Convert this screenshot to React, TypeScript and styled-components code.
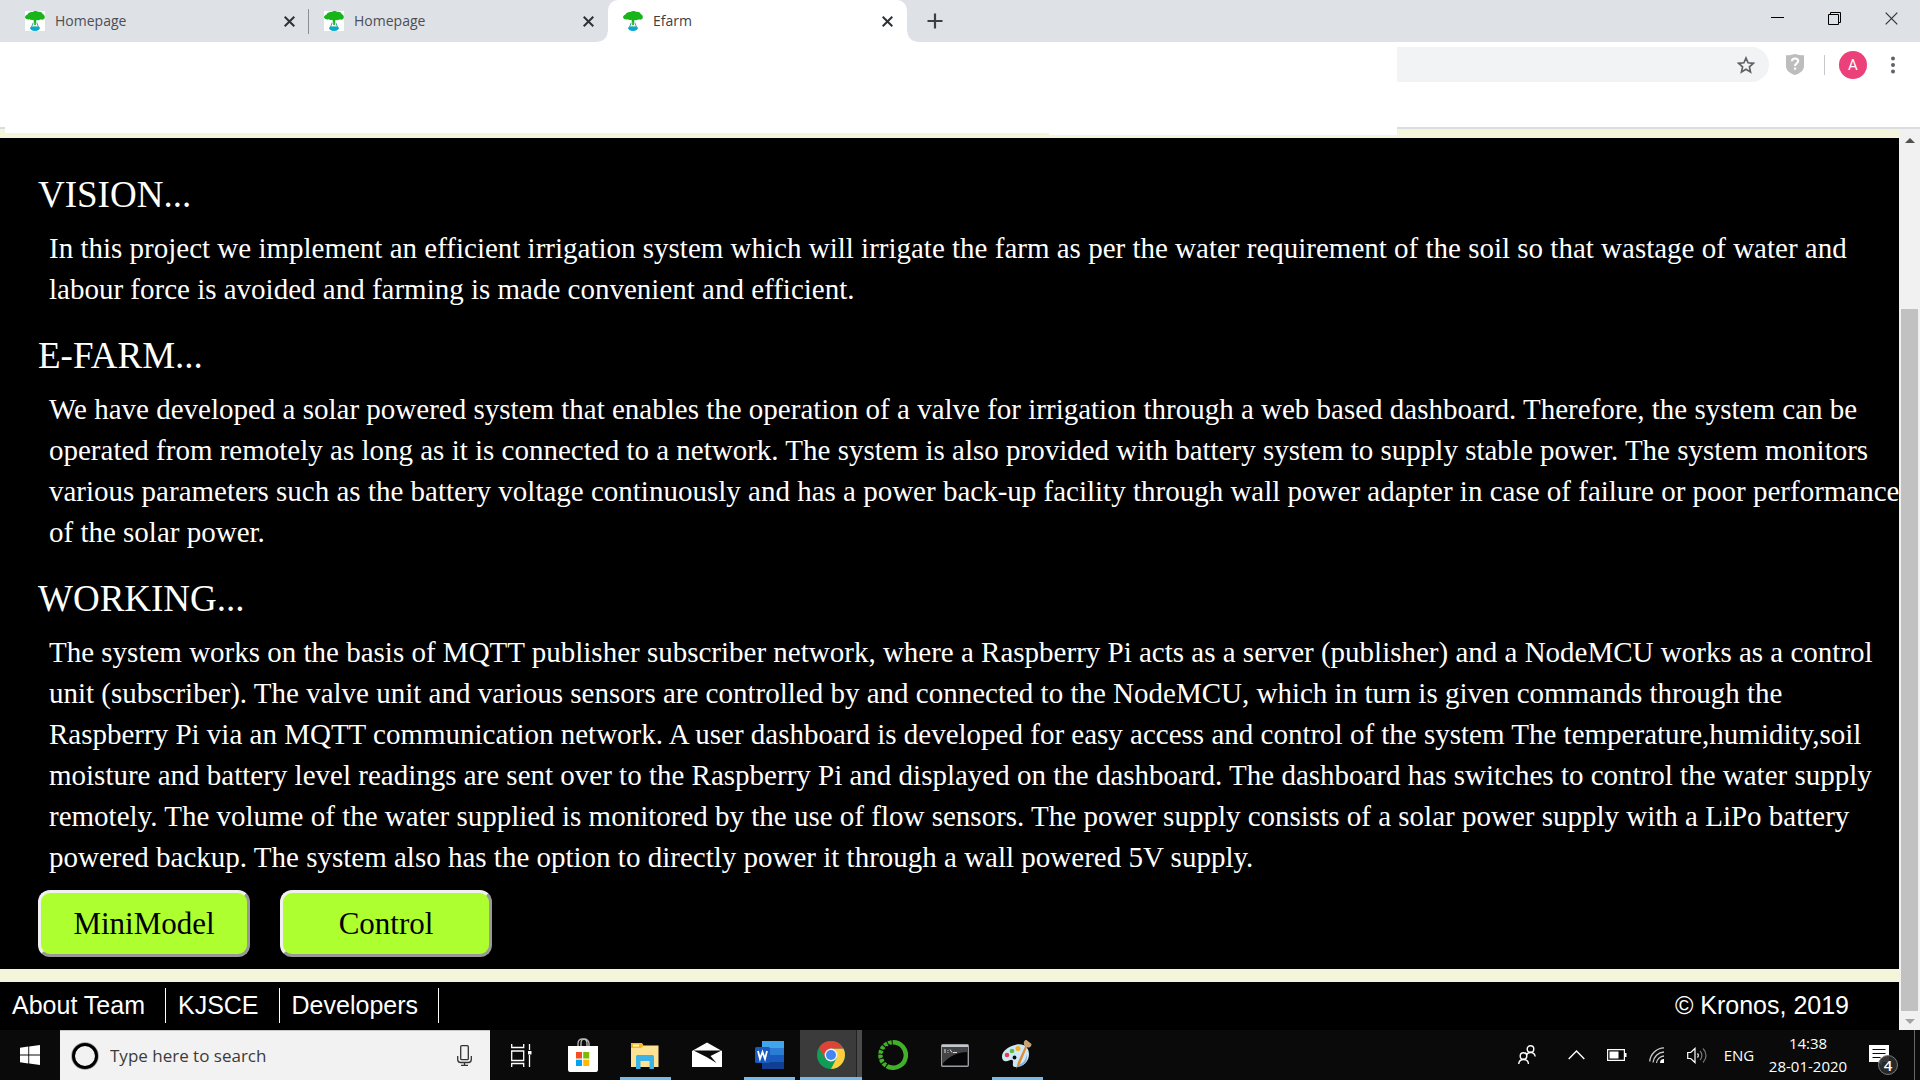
import React from "react";
import styled, { createGlobalStyle } from "styled-components";

const ui = `"Open Sans", "Noto Sans", sans-serif`;
const serif = `"Liberation Serif", "Times New Roman", serif`;
const sans = `"Liberation Sans", Arial, sans-serif`;

const GlobalStyle = createGlobalStyle`
  * { box-sizing: border-box; }
  body { margin: 0; background: #000; }
  button, input { font: inherit; border: 0; padding: 0; background: none; color: inherit; border-radius: 0; }
  svg { display: block; flex: none; }
`;

const Screen = styled.div`
  display: flex;
  flex-direction: column;
  min-height: 100vh;
`;

/* ---------- browser chrome ---------- */
const TabStrip = styled.header`
  display: flex;
  height: 42px;
  background: #dee1e6;
  padding-left: 10px;
`;

const Tab = styled.div<{ $active?: boolean; $divided?: boolean }>`
  position: relative;
  display: flex;
  align-items: center;
  width: 299px;
  padding: 0 14px 0 15px;
  gap: 10px;
  font: 14px/20px ${ui};
  color: ${(p) => (p.$active ? "#3c4043" : "#4b4f54")};
  background: ${(p) => (p.$active ? "#fff" : "transparent")};
  border-radius: 10px 10px 0 0;
  &::before, &::after {
    content: "";
    display: ${(p) => (p.$active ? "block" : "none")};
    position: absolute;
    bottom: 0;
    width: 10px;
    height: 10px;
  }
  &::before { left: -10px; background: radial-gradient(circle at 0 0, transparent 9px, #fff 10px); }
  &::after { right: -10px; background: radial-gradient(circle at 100% 0, transparent 9px, #fff 10px); }
  ${(p) => p.$divided && `background: linear-gradient(#8a8d91, #8a8d91) right 9px / 1px 25px no-repeat;`}
`;

const TabTitle = styled.span`flex: 1;`;

const IconButton = styled.button<{ $w: number }>`
  display: flex;
  align-items: center;
  justify-content: center;
  align-self: stretch;
  width: ${(p) => p.$w}px;
`;

const WindowButtons = styled.div`
  display: flex;
  margin-left: auto;
  height: 37px;
`;

const Toolbar = styled.div`
  display: flex;
  justify-content: flex-end;
  align-items: flex-start;
  height: 85px;
  padding: 5px 13px 0 0;
  background: #fff;
`;

const Omnibox = styled.label`
  display: flex;
  width: 372px;
  height: 35px;
  padding-right: 8px;
  background: #f1f3f4;
  border-radius: 0 18px 18px 0;
  color: #202124;
  font: 16px/20px ${ui};
  input { flex: 1; min-width: 0; outline: 0; }
`;

const Extras = styled.div`
  display: flex;
  align-items: center;
  height: 35px;
`;

const ToolbarRule = styled.span`
  width: 1px;
  height: 20px;
  margin: 0 14px 0 3px;
  background: #c4c7cb;
`;

const Avatar = styled.button`
  width: 28px;
  height: 28px;
  border-radius: 50%;
  background: #ec407a;
  color: #fff;
  font: 15px/28px Roboto, sans-serif;
  margin-right: 12px;
`;

/* ---------- web page ---------- */
const Viewport = styled.div`
  display: flex;
  flex: 1;
`;

const Page = styled.div`
  display: flex;
  flex-direction: column;
  flex: 1;
  min-width: 0;
  background: #f5f5dc;
`;

const PageTop = styled.div`
  display: flex;
  align-items: flex-start;
  height: 11px;
`;

const Edge = styled.span<{ $w: number }>`
  width: ${(p) => p.$w}px;
  height: 2px;
  background: #dadce0;
`;

const Blank = styled.span<{ $grow: number; $h: number }>`
  flex: ${(p) => p.$grow} 1 0;
  height: ${(p) => p.$h}px;
  background: #fff;
`;

const Content = styled.main`
  flex: 1;
  padding: 34px 0 12px 38px;
  background: #000;
  color: #fff;
  font-family: ${serif};
`;

const Heading = styled.h2`
  margin: 0 0 10px;
  font-size: 37px;
  font-weight: 400;
  line-height: 46px;
`;

const Paragraph = styled.p`
  margin: 0 -3px 23px 11px;
  font-size: 29px;
  line-height: 41px;
`;

const Actions = styled.div`
  display: flex;
  gap: 30px;
  margin-top: -11px;
`;

const ActionButton = styled.button`
  width: 212px;
  height: 67px;
  border: 3px solid;
  border-color: #f0f0f0 #999 #999 #f0f0f0;
  border-radius: 12px;
  background: #adff2f;
  color: #000;
  font-size: 31px;
`;

const Footer = styled.footer`
  display: flex;
  align-items: center;
  height: 48px;
  margin-top: 13px;
  padding: 0 50px 2px 0;
  background: #000;
  color: #fff;
  font: 25px/35px ${sans};
`;

const FooterLink = styled.a`
  padding: 0 20px 0 12px;
  border-right: 1px solid #fff;
  color: #fff;
  text-decoration: none;
`;

const Copyright = styled.span`margin-left: auto;`;

const Scrollbar = styled.div`
  display: flex;
  flex-direction: column;
  align-items: center;
  width: 21px;
  padding: 9px 0 6px;
  border-top: 2px solid #dadce0;
  background: #f1f1f1;
`;

const Thumb = styled.div`
  width: 17px;
  flex: 702 1 0;
  margin-bottom: 8px;
  background: #c1c1c1;
`;

const Track = styled.div`flex: 166 1 0;`;

/* ---------- taskbar ---------- */
const Taskbar = styled.footer`
  display: flex;
  height: 50px;
  background: #0a0a0a;
  color: #fff;
  font-family: ${ui};
`;

const Search = styled.label`
  display: flex;
  align-items: center;
  width: 430px;
  padding: 0 18px 0 11px;
  gap: 11px;
  background: #f2f2f2;
  border-top: 1px solid #c9c5c5;
  color: #333;
  font-size: 17px;
  input { flex: 1; min-width: 0; outline: 0; }
  input::placeholder { color: #3b3b3b; opacity: 1; }
`;

const Apps = styled.nav`display: flex;`;

const AppButton = styled.button<{ $running?: boolean; $current?: boolean }>`
  display: flex;
  align-items: center;
  justify-content: center;
  width: 62px;
  background:
    ${(p) => (p.$running ? "linear-gradient(#76b9ed, #76b9ed) center bottom / 51px 3px no-repeat," : "")}
    ${(p) => (p.$current ? "linear-gradient(#76b9ed, #76b9ed) center bottom / 100% 3px no-repeat, linear-gradient(90deg, #3b3b3b 56px, #222 56px, #222 57px, #4b4b4b 57px)" : "linear-gradient(#0a0a0a, #0a0a0a)")};
`;

const Tray = styled.div`
  display: flex;
  align-items: stretch;
  margin-left: auto;
`;

const TrayButton = styled.button<{ $w: number }>`
  display: flex;
  align-items: center;
  justify-content: center;
  width: ${(p) => p.$w}px;
  font-size: 15px;
`;

const Clock = styled.button`
  width: 94px;
  font-size: 15px;
  line-height: 23px;
  white-space: nowrap;
`;

const Notifications = styled.button`
  display: flex;
  width: 59px;
  padding: 15px 0 0 14px;
  position: relative;
`;

const Count = styled.span`
  position: absolute;
  left: 23px;
  top: 25px;
  width: 20px;
  height: 20px;
  border: 1px solid #777;
  border-radius: 50%;
  background: #2b2b2bee;
  font-size: 15px;
  font-weight: 600;
  line-height: 18px;
`;

const ShowDesktop = styled.button`
  width: 6px;
  border-left: 1px solid #666;
`;

/* ---------- drawings ---------- */
const TreeIcon = () => (
  <svg width="20" height="20" viewBox="0 0 20 20">
    <rect width="20" height="20" fill="#fff" />
    <path d="M0 6.500C0 5 1 4 2.500 3.500 3 1.500 6 1 7.500 1 9-.3 12-.2 13 .8c3-.3 4 .7 4.500 2C20 4 20.500 7 19 8c-1 1-2.500.5-3.500.5-1.500.8-3 .7-4 .5l-.5 2.500h-2L8.500 8.800c-1.500.5-3 .2-4-.5C3 9 .5 8 0 6.500z" fill="#18b51a" />
    <path d="M8.300 11.500L6.500 16h7l-1.800-4.500" fill="#fff" stroke="#3aa89a" strokeWidth="1" />
    <path d="M9.200 8h1.700v6H9.200z" fill="#18b51a" />
    <path d="M5 17c0-1 2-1.200 5-1.200s5 .2 5 1.200c0 1.500-2 3-5 3s-5-1.500-5-3z" fill="#06a9cf" />
  </svg>
);

const Cross = ({ size, width }: { size: number; width: number }) => (
  <svg width={size} height={size} viewBox={`0 0 ${size} ${size}`} stroke="#2f3236" strokeWidth={width}>
    <path d={`M.7 .7L${size - 0.7} ${size - 0.7}M${size - 0.7} .7L.7 ${size - 0.7}`} />
  </svg>
);

const PlusIcon = () => (
  <svg width="16" height="16" stroke="#3c4043" strokeWidth="2.200"><path d="M8 .5v15M.5 8h15" /></svg>
);

const MinimizeIcon = () => <svg width="13" height="13"><path d="M0 5.500h13" stroke="#000" /></svg>;

const RestoreIcon = () => (
  <svg width="13" height="13" fill="none" stroke="#000"><path d="M.5 2.500h10v10H.5zM2.500 2V.5h10v10H11" /></svg>
);

const StarIcon = () => (
  <svg width="18" height="18" viewBox="0 0 18 18" fill="none" stroke="#5f6368" strokeWidth="1.700">
    <path d="M9 2l2.100 4.800 5.200.5-3.900 3.500 1.100 5.100L9 13.200l-4.500 2.700 1.100-5.100L1.700 7.300l5.200-.5z" />
  </svg>
);

const ShieldIcon = () => (
  <svg width="18" height="21" viewBox="0 0 18 21">
    <path d="M9 0c3 1 5.500 1.200 9 1.200V12c0 5-4.500 7.500-9 9-4.500-1.500-9-4-9-9V1.200C3.500 1.200 6 1 9 0z" fill="#bdbdbd" />
    <path d="M5.900 7.200C6 5.300 7.300 4.500 9 4.500s3.200.9 3.200 2.600C12.200 9.300 9 9.400 9 12" fill="none" stroke="#fff" strokeWidth="2.100" />
    <path d="M7.900 13.500h2.300v2.200H7.900z" fill="#fff" />
  </svg>
);

const DotsIcon = () => (
  <svg width="4" height="18" fill="#5f6368"><circle cx="2" cy="2.500" r="2" /><circle cx="2" cy="9" r="2" /><circle cx="2" cy="15.500" r="2" /></svg>
);

const Arrow = ({ down }: { down?: boolean }) => (
  <svg width="10" height="5"><path d={down ? "M0 0h10L5 5z" : "M0 5h10L5 0z"} fill={down ? "#a3a3a3" : "#505050"} /></svg>
);

const WindowsIcon = () => (
  <svg width="20" height="20" viewBox="0 0 20 20" fill="#fff">
    <path d="M0 2.800L8.300 1.600V9.500H0zM9.200 1.500L20 0v9.500H9.200zM0 10.500h8.300v7.900L0 17.200zM9.200 10.500H20V20L9.200 18.500z" />
  </svg>
);

const MicIcon = () => (
  <svg width="15" height="21" viewBox="0 0 15 21" fill="none" stroke="#333" strokeWidth="1.300">
    <rect x="3.700" y=".7" width="7.600" height="14" rx="1" /><path d="M.7 11v3.500c0 2 1 3 3 3h7.600c2 0 3-1 3-3V11M7.500 17.500v2.800M4 20.300h7" />
  </svg>
);

const TaskViewIcon = () => (
  <svg width="21" height="23" viewBox="0 0 21 23" fill="none" stroke="#fff" strokeWidth="1.300">
    <path d="M.7 0v3.500h12V0M.7 7h12v9.500H.7zM.7 23v-3.500h12V23M18.500 0v6M18.500 11v12" /><path d="M17 7h3.500v3.500H17z" fill="#fff" stroke="none" />
  </svg>
);

const StoreIcon = () => (
  <svg width="30" height="34" viewBox="0 0 30 34">
    <path d="M10 9V5.500C10 2.500 12 .8 14.500.8S19 2.500 19 5.500V9M13 9V5c0-3 1.500-4 3.500-4S21 3 21 5.500V9" fill="none" stroke="#bbb" strokeWidth="1.300" />
    <path d="M0 8h30v23c0 2-.5 3-2 3H2c-1.500 0-2-1-2-3z" fill="#fff" />
    <path d="M8 14h6v6.500H8z" fill="#f25022" /><path d="M15.200 14h6v6.500h-6z" fill="#7fba00" /><path d="M8 21.700h6V28H8z" fill="#00a4ef" /><path d="M15.200 21.700h6V28h-6z" fill="#ffb900" />
  </svg>
);

const FolderIcon = () => (
  <svg width="28" height="28" viewBox="0 0 28 28">
    <path d="M0 2h11l2 3h14v7H0z" fill="#f5b921" /><path d="M2 3.500h6v2H2z" fill="#fff3c0" />
    <path d="M0 7h10l3-2.500h14.500V26H0z" fill="#ffe394" />
    <path d="M5 28V16c0-1.500.5-2 2-2h14c1.500 0 2 .5 2 2v12h-4.500v-8h-9v8z" fill="#3bb3e8" />
  </svg>
);

const MailIcon = () => (
  <svg width="30" height="28" viewBox="0 0 30 28">
    <path d="M0 10L15 1.500l15 8.500v16H0z" fill="#fff" /><path d="M1.500 9.500h28L18.500 15l6 7-10-6z" fill="#0a0a0a" />
  </svg>
);

const WordIcon = () => (
  <svg width="29" height="28" viewBox="0 0 29 28">
    <path d="M7 0h22v7H7z" fill="#41a5ee" /><path d="M7 7h22v7H7z" fill="#2b7cd3" /><path d="M7 14h22v7H7z" fill="#185abd" /><path d="M7 21h22v7H7z" fill="#103f91" />
    <rect y="6" width="15" height="16" rx="1.500" fill="#185abd" />
    <path d="M3 10l2 8 2.500-7L10 18l2-8" fill="none" stroke="#fff" strokeWidth="1.800" />
  </svg>
);

const ChromeIcon = () => (
  <svg width="28" height="28" viewBox="0 0 28 28">
    <circle cx="14" cy="14" r="14" fill="#0f9d58" />
    <path d="M14 7.600h12.400A14 14 0 0 1 14 28l5.500-10.800z" fill="#ffcd40" />
    <path d="M14 7.600h12.400A14 14 0 0 0 1.900 7l6.500 10.200z" fill="#db4437" />
    <circle cx="14" cy="14" r="6.400" fill="#f1f1f1" /><circle cx="14" cy="14" r="5" fill="#4285f4" />
  </svg>
);

const CondaIcon = () => (
  <svg width="30" height="30" viewBox="0 0 30 30" fill="none" stroke="#43b02a">
    <path d="M15 2.300a12.700 12.700 0 1 1-4 24.700" strokeWidth="4.500" />
    <path d="M12 27.300A12.700 12.700 0 0 1 15 2.300" strokeWidth="4.500" strokeDasharray="3.500 1" />
    <path d="M10 25A11.500 11.500 0 0 1 12 4.500" strokeWidth="1.200" stroke="#0a0a0a" strokeDasharray="1.500 2.500" />
  </svg>
);

const TerminalIcon = () => (
  <svg width="28" height="23" viewBox="0 0 28 23">
    <rect x=".7" y=".7" width="26.600" height="21.600" rx="1" fill="#050505" stroke="#9a9da2" strokeWidth="1.400" />
    <path d="M1.500 3h25v5C17 8 8 12 1.500 20z" fill="#424446" /><path d="M1 2h26" stroke="#c4c8cc" strokeWidth="2" />
    <path d="M3 6h2M3 8h2M7 6v.8M7 8v.8M9 5.500l2 3M12 8.500h4" stroke="#ddd" />
  </svg>
);

const PaintIcon = () => (
  <svg width="30" height="30" viewBox="0 0 30 30">
    <path d="M13 5c8-2.500 14 2 14 9 0 8-6 13-14 13-3 0-2-3-2-5s-1-3-4-1.500-7 1-7-4C0 11 6 7 13 5z" fill="#cfe8f7" />
    <path d="M15 25c6-1 9-5 10-11 1 7-3 13-10 13z" fill="#7fb2dc" />
    <circle cx="5" cy="15" r="2.300" fill="#e8433a" /><circle cx="10" cy="11" r="2.300" fill="#5cba47" /><circle cx="16" cy="8.500" r="2.500" fill="#f2b020" /><circle cx="12.500" cy="17.500" r="1.900" fill="#0a0a0a" />
    <path d="M23.500 5.500L16 22l-2 7 4-5 7.500-18z" fill="#e08a34" /><path d="M22.500 6C21 2.500 22 0 24.500 0l5 4C29.500 7 27 8 25.500 7.500z" fill="#c9a274" />
  </svg>
);

const PeopleIcon = () => (
  <svg width="18" height="20" viewBox="0 0 18 20" fill="none" stroke="#fff" strokeWidth="1.400">
    <circle cx="12.500" cy="4" r="3.300" /><path d="M8.500 10c1.500-3.500 7.800-3.500 8.700 1.500" /><circle cx="5.500" cy="11" r="3.300" /><path d="M.7 19c.5-6 9.300-6 9.800 0" />
  </svg>
);

const ChevronIcon = () => <svg width="17" height="10" fill="none" stroke="#fff" strokeWidth="1.400"><path d="M.7 9l7.800-8 7.800 8" /></svg>;

const BatteryIcon = () => (
  <svg width="20" height="12"><path d="M.6.6h16.800v10.800H.6z" fill="none" stroke="#fff" strokeWidth="1.200" /><path d="M2.500 2.500h9v7h-9zM18 4h1.500v4H18z" fill="#fff" /></svg>
);

const WifiIcon = () => (
  <svg width="16" height="17" viewBox="0 0 16 17" fill="none" stroke="#aaa" strokeWidth="1.300">
    <path d="M.7 14.500A15 15 0 0 1 15 .8M4 15.500A11.500 11.500 0 0 1 15 5M7.500 16A8 8 0 0 1 15 9" stroke="#ccc" /><path d="M11 16a4 4 0 0 1 4-4v4z" fill="#fff" stroke="none" />
  </svg>
);

const SpeakerIcon = () => (
  <svg width="21" height="17" viewBox="0 0 21 17" fill="none" stroke="#fff" strokeWidth="1.200">
    <path d="M.7 5.500h3L8 1.500v14l-4.300-4h-3zM10.500 6.500c1 1 1 3 0 4" /><path d="M13 4c2.500 2.500 2.500 6.500 0 9M16 1.500c4 4 4 10 0 14" stroke="#777" />
  </svg>
);

const NoteIcon = () => (
  <svg width="20" height="21"><path d="M0 0h20v17h-7v4l-4-4H0z" fill="#fff" /><path d="M3.500 4.500h13M3.500 8.500h13M3.500 12.500h8" stroke="#0a0a0a" /></svg>
);

const tabs = ["Homepage", "Homepage", "Efarm"];

const sections = [
  {
    title: "VISION...",
    text: "In this project we implement an efficient irrigation system which will irrigate the farm as per the water requirement of the soil so that wastage of water and labour force is avoided and farming is made convenient and efficient.",
  },
  {
    title: "E-FARM...",
    text: "We have developed a solar powered system that enables the operation of a valve for irrigation through a web based dashboard. Therefore, the system can be operated from remotely as long as it is connected to a network. The system is also provided with battery system to supply stable power. The system monitors various parameters such as the battery voltage continuously and has a power back-up facility through wall power adapter in case of failure or poor performance of the solar power.",
  },
  {
    title: "WORKING...",
    text: "The system works on the basis of MQTT publisher subscriber network, where a Raspberry Pi acts as a server (publisher) and a NodeMCU works as a control unit (subscriber). The valve unit and various sensors are controlled by and connected to the NodeMCU, which in turn is given commands through the Raspberry Pi via an MQTT communication network. A user dashboard is developed for easy access and control of the system The temperature,humidity,soil moisture and battery level readings are sent over to the Raspberry Pi and displayed on the dashboard. The dashboard has switches to control the water supply remotely. The volume of the water supplied is monitored by the use of flow sensors. The power supply consists of a solar power supply with a LiPo battery powered backup. The system also has the option to directly power it through a wall powered 5V supply.",
  },
];

const apps = [
  { name: "Task View", icon: <TaskViewIcon /> },
  { name: "Store", icon: <StoreIcon /> },
  { name: "File Explorer", icon: <FolderIcon />, running: true },
  { name: "Mail", icon: <MailIcon /> },
  { name: "Word", icon: <WordIcon />, running: true },
  { name: "Chrome", icon: <ChromeIcon />, current: true },
  { name: "Anaconda", icon: <CondaIcon /> },
  { name: "Command Prompt", icon: <TerminalIcon /> },
  { name: "Paint", icon: <PaintIcon />, running: true },
];

export default function App() {
  return (
    <Screen>
      <GlobalStyle />
      <TabStrip>
        {tabs.map((title, i) => (
          <Tab key={i} $active={i === 2} $divided={i === 0}>
            <TreeIcon />
            <TabTitle>{title}</TabTitle>
            <IconButton $w={12} aria-label="Close tab"><Cross size={11} width={2} /></IconButton>
          </Tab>
        ))}
        <IconButton $w={56} aria-label="New tab"><PlusIcon /></IconButton>
        <WindowButtons>
          <IconButton $w={57} aria-label="Minimize"><MinimizeIcon /></IconButton>
          <IconButton $w={57} aria-label="Restore"><RestoreIcon /></IconButton>
          <IconButton $w={57} aria-label="Close"><Cross size={13} width={1.2} /></IconButton>
        </WindowButtons>
      </TabStrip>
      <Toolbar>
        <Omnibox>
          <input type="text" aria-label="Address" />
          <IconButton $w={30} aria-label="Bookmark"><StarIcon /></IconButton>
        </Omnibox>
        <Extras>
          <IconButton $w={52} aria-label="Extension"><ShieldIcon /></IconButton>
          <ToolbarRule />
          <Avatar>A</Avatar>
          <IconButton $w={28} aria-label="Menu"><DotsIcon /></IconButton>
        </Extras>
      </Toolbar>
      <Viewport>
        <Page>
          <PageTop>
            <Edge $w={5} />
            <Blank $grow={3} $h={6} />
            <Blank $grow={1} $h={8} />
            <Edge $w={502} />
          </PageTop>
          <Content>
            {sections.map((s) => (
              <section key={s.title}>
                <Heading>{s.title}</Heading>
                <Paragraph>{s.text}</Paragraph>
              </section>
            ))}
            <Actions>
              <ActionButton>MiniModel</ActionButton>
              <ActionButton>Control</ActionButton>
            </Actions>
          </Content>
          <Footer>
            <FooterLink href="#team">About Team</FooterLink>
            <FooterLink href="#kjsce">KJSCE</FooterLink>
            <FooterLink href="#developers">Developers</FooterLink>
            <Copyright>© Kronos, 2019</Copyright>
          </Footer>
        </Page>
        <Scrollbar>
          <Arrow />
          <Track />
          <Thumb />
          <Arrow down />
        </Scrollbar>
      </Viewport>
      <Taskbar>
        <TrayButton $w={60} aria-label="Start"><WindowsIcon /></TrayButton>
        <Search>
          <svg width="28" height="28" fill="none"><circle cx="14" cy="14" r="12" stroke="#999" strokeWidth="3.500" /><circle cx="14" cy="14" r="11.500" stroke="#000" strokeWidth="3" /></svg>
          <input type="text" placeholder="Type here to search" aria-label="Search" />
          <MicIcon />
        </Search>
        <Apps>
          {apps.map((a) => (
            <AppButton key={a.name} aria-label={a.name} $running={a.running} $current={a.current}>{a.icon}</AppButton>
          ))}
        </Apps>
        <Tray>
          <TrayButton $w={56} aria-label="People"><PeopleIcon /></TrayButton>
          <TrayButton $w={42} aria-label="Show hidden icons"><ChevronIcon /></TrayButton>
          <TrayButton $w={40} aria-label="Battery"><BatteryIcon /></TrayButton>
          <TrayButton $w={40} aria-label="Network"><WifiIcon /></TrayButton>
          <TrayButton $w={40} aria-label="Volume"><SpeakerIcon /></TrayButton>
          <TrayButton $w={44}>ENG</TrayButton>
          <Clock>14:38<br />28-01-2020</Clock>
          <Notifications aria-label="Notifications"><NoteIcon /><Count>4</Count></Notifications>
          <ShowDesktop aria-label="Show desktop" />
        </Tray>
      </Taskbar>
    </Screen>
  );
}
